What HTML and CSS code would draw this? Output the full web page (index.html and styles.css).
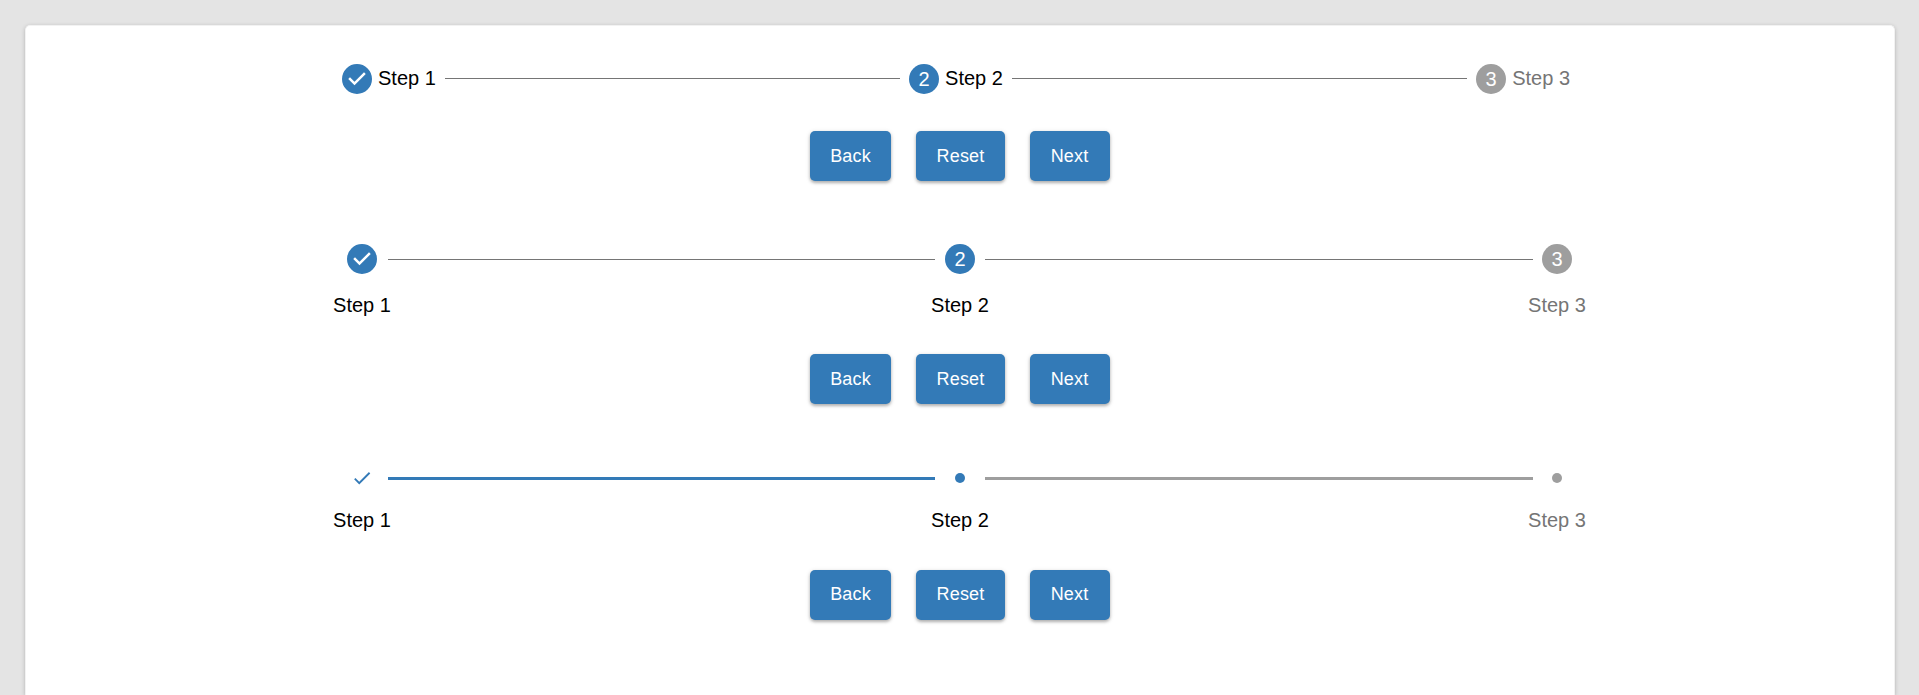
FILE: index.html
```html
<!DOCTYPE html>
<html lang="en">
<head>
<meta charset="utf-8">
<title>Stepper</title>
<link rel="stylesheet" href="styles.css">
</head>
<body>
<main class="paper">
  <section class="demo">
    <ol class="stepper horizontal">
      <li class="step"><svg class="icon" viewBox="0 0 24 24"><path d="M12 0a12 12 0 1 0 0 24 12 12 0 0 0 0-24zm-2 17l-5-5 1.400-1.400 3.600 3.600 7.600-7.600L19 8l-9 9z"/></svg><span class="label">Step 1</span></li>
      <li class="line"></li>
      <li class="step"><svg class="icon" viewBox="0 0 24 24"><circle cx="12" cy="12" r="12"/><text x="12" y="17.600">2</text></svg><span class="label">Step 2</span></li>
      <li class="line"></li>
      <li class="step off"><svg class="icon" viewBox="0 0 24 24"><circle cx="12" cy="12" r="12"/><text x="12" y="17.600">3</text></svg><span class="label">Step 3</span></li>
    </ol>
    <div class="actions"><button class="btn back">Back</button><button class="btn reset">Reset</button><button class="btn next">Next</button></div>
  </section>
  <section class="demo alt">
    <ol class="stepper vertical">
      <li class="step"><svg class="icon" viewBox="0 0 24 24"><path d="M12 0a12 12 0 1 0 0 24 12 12 0 0 0 0-24zm-2 17l-5-5 1.400-1.400 3.600 3.600 7.600-7.600L19 8l-9 9z"/></svg><span class="label">Step 1</span></li>
      <li class="line first"></li>
      <li class="step"><svg class="icon" viewBox="0 0 24 24"><circle cx="12" cy="12" r="12"/><text x="12" y="17.600">2</text></svg><span class="label">Step 2</span></li>
      <li class="line second"></li>
      <li class="step off"><svg class="icon" viewBox="0 0 24 24"><circle cx="12" cy="12" r="12"/><text x="12" y="17.600">3</text></svg><span class="label">Step 3</span></li>
    </ol>
    <div class="actions"><button class="btn back">Back</button><button class="btn reset">Reset</button><button class="btn next">Next</button></div>
  </section>
  <section class="demo dots">
    <ol class="stepper vertical">
      <li class="step"><svg class="check" viewBox="0 0 24 24"><path d="M9 16.170L4.830 12l-1.420 1.410L9 19 21 7l-1.410-1.410z"/></svg><span class="label">Step 1</span></li>
      <li class="line first done"></li>
      <li class="step"><span class="dot"></span><span class="label">Step 2</span></li>
      <li class="line second"></li>
      <li class="step off"><span class="dot"></span><span class="label">Step 3</span></li>
    </ol>
    <div class="actions"><button class="btn back">Back</button><button class="btn reset">Reset</button><button class="btn next">Next</button></div>
  </section>
</main>
</body>
</html>
```
FILE: styles.css
```css
* { box-sizing: border-box; }
html { overflow: hidden; }
body { margin: 0; height: 695px; overflow: hidden; padding: 25px 24px 0 25px; background: #e4e4e4; font-family: "Liberation Sans", Arial, sans-serif; font-size: 20px; color: #000; }
.paper { height: 670px; background: #fff; border: 1px solid #f2f2f2; border-bottom: 0; border-radius: 5px 5px 0 0; padding: 38px 1px 0 0; box-shadow: 0 1px 4px rgba(0,0,0,.2), 0 1px 1px rgba(0,0,0,.1); }
.demo { width: 1253px; margin: 0 auto; }
.stepper { list-style: none; margin: 0; padding: 0; display: flex; }
.horizontal { height: 30px; padding: 0 16px 0 9px; }
.step { display: flex; }
.off { color: #757575; }
.icon { width: 30px; height: 30px; display: block; fill: #337ab7; }
.off .icon { fill: #9e9e9e; }
.icon text { fill: #fff; font-size: 16px; text-anchor: middle; }
.horizontal .label { margin: 2px 0 0 6px; }
.label { line-height: 24px; white-space: nowrap; }
.line { flex: 1; height: 1px; background: #757575; }
.horizontal .line { margin: 14px 9px 0; }
.actions { display: flex; justify-content: center; gap: 25px; margin-top: 37px; padding-left: 1px; }
.btn { height: 50px; padding: 0; border: 0; border-radius: 5px; background: #337ab7; color: #fff; font: 18px "Liberation Sans", Arial, sans-serif; letter-spacing: .15px; box-shadow: 0 2px 3px rgba(0,0,0,.24), 0 1px 5px rgba(0,0,0,.14); }
.back { width: 81px; }
.reset { width: 89px; }
.next { width: 80px; padding-right: 1px; }
.alt { margin-top: 63px; }
.vertical .step { flex-direction: column; align-items: center; width: 58px; flex: none; }
.vertical .line { flex: none; margin-top: 15px; }
.first { width: 547px; margin: 0 -4px 0 -3px; }
.second { width: 548px; margin: 0 -5px 0 -4px; }
.alt .label { margin-top: 19px; }
.dots { margin-top: 63px; }
.check { width: 22px; height: 22px; fill: #337ab7; }
.dot { width: 10px; height: 10px; margin: 6px; border-radius: 50%; background: #337ab7; }
.off .dot { background: #9e9e9e; }
.dots .label { margin-top: 19px; }
.dots .line { height: 3px; margin-top: 10px; background: #9e9e9e; }
.dots .line.done { background: #337ab7; }
.dots .actions { margin-top: 38px; }
.dots .btn { padding-bottom: 2px; }
```
